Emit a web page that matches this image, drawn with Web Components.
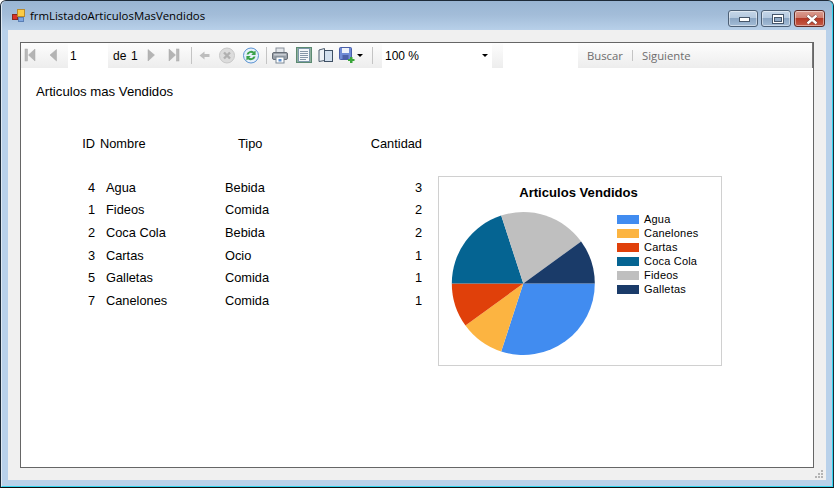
<!DOCTYPE html>
<html>
<head>
<meta charset="utf-8">
<title>frmListadoArticulosMasVendidos</title>
<style>
  html, body { margin: 0; padding: 0; background: #fff; overflow: hidden; }
</style>
</head>
<body>
<win-frame caption="frmListadoArticulosMasVendidos">
  <report-viewer>
    <report-page heading="Articulos mas Vendidos">
      <sales-table></sales-table>
      <pie-chart slot="chart" caption="Articulos Vendidos"></pie-chart>
    </report-page>
  </report-viewer>
</win-frame>

<script>
// Window chrome: title bar, caption buttons and client area
class WinFrame extends HTMLElement {
  constructor() {
    super();
    this.shadow = this.attachShadow({mode: 'open'});
    this.shadow.innerHTML = `<style>
    :host {
      display: block;
      width: 834px;
      height: 488px;
      box-sizing: border-box;
      border: 1px solid #1d2a38;
      border-bottom-color: #0c0c0c;
      border-radius: 6px 6px 0 0;
      background: linear-gradient(#99b5d3 0, #a3bdd9 14px, #b9d1ea 30px);
      font-family: "Liberation Sans", sans-serif;
      position: relative;
    }
    .inner {
      height: 100%;
      box-sizing: border-box;
      display: flex;
      flex-direction: column;
      border-left: 1px solid #dfe9f3;
      border-right: 1px solid #33d4ee;
      border-bottom: 1px solid #33d4ee;
      border-radius: 5px 5px 0 0;
      padding: 0 6px 6px 6px;
    }
    .title {
      flex: 0 0 29px;
      display: flex;
      align-items: center;
      position: relative;
    }
    .title svg { margin: 1px 0 0 4px; }
    .title span {
      margin: 0 0 0 5px;
      font: 11.4px "Open Sans", sans-serif;
      color: #000;
    }
    .buttons {
      margin-left: auto;
      margin-right: 1px;
      display: flex;
      gap: 3px;
      align-self: flex-start;
      margin-top: 9px;
    }
    .btn {
      width: 30px;
      height: 17px;
      box-sizing: border-box;
      border: 1px solid #4c5f75;
      border-radius: 3px;
      box-shadow: inset 0 0 0 1px rgba(255,255,255,.45);
      background: linear-gradient(#c5d6e8 0, #b4c9df 45%, #8ba6c4 50%, #a3bcd6 100%);
      display: flex;
      align-items: center;
      justify-content: center;
    }
    .btn.close {
      background: linear-gradient(#dc9d90 0, #cf7f71 45%, #b53a26 50%, #c55a47 100%);
      border-color: #5f2b26;
      width: 31px;
    }
    .client {
      flex: 1;
      display: flex;
      background: #f0f0f0;
      padding: 12px;
      min-height: 0;
      position: relative;
    }
    .grip { position: absolute; right: 3px; bottom: 2px; }
    </style>
    <div class="inner">
      <div class="title">
        <svg width="13" height="14" viewBox="0 0 13 14">
          <rect x="0.5" y="5.5" width="5" height="5" fill="#d8342a" stroke="#8a2a20"/>
          <rect x="5.5" y="0.5" width="7" height="7" fill="#fbcb45" stroke="#b98a2c"/>
          <rect x="6.5" y="8.5" width="5" height="4" fill="#7ea6e0" stroke="#5a7fb5"/>
        </svg>
        <span></span>
        <div class="buttons">
          <div class="btn">
            <svg width="14" height="7" viewBox="0 0 14 7"><rect x="1.5" y="1.5" width="10" height="4" fill="#fff" stroke="#46566a"/></svg>
          </div>
          <div class="btn">
            <svg width="12" height="10" viewBox="0 0 12 10"><rect x="0.5" y="0.5" width="11" height="9" fill="#fff" stroke="#46566a"/><rect x="2.5" y="3.5" width="7" height="4" fill="#8fa9c6" stroke="#46566a"/></svg>
          </div>
          <div class="btn close">
            <svg width="14" height="11" viewBox="0 0 14 11"><path d="M2.5 1.5 L11.5 9.5 M11.5 1.5 L2.5 9.5" stroke="#5a2a26" stroke-width="3.6"/><path d="M2.5 1.5 L11.5 9.5 M11.5 1.5 L2.5 9.5" stroke="#fff" stroke-width="2.4"/></svg>
          </div>
        </div>
      </div>
      <div class="client">
        <slot></slot>
        <svg class="grip" width="8" height="8" viewBox="0 0 8 8" fill="#b4b4b4">
          <rect x="6" y="0" width="2" height="2"/>
          <rect x="3" y="3" width="2" height="2"/><rect x="6" y="3" width="2" height="2"/>
          <rect x="0" y="6" width="2" height="2"/><rect x="3" y="6" width="2" height="2"/><rect x="6" y="6" width="2" height="2"/>
        </svg>
      </div>
    </div>`;
    this.shadow.querySelector('.title span').textContent = this.getAttribute('caption');
  }
}

// One 18px toolbar icon, picked by name
const TOOL_ICONS = {
  first: `<rect x="4" y="3" width="2.5" height="12" fill="#b9b9b9" stroke="#a8a8a8" stroke-width=".5"/><path d="M14 3 V15 L7.5 9 Z" fill="#b4b4b4" stroke="#a8a8a8" stroke-width=".5"/>`,
  prev: `<path d="M12.5 3.5 V15 L6 9 Z" fill="#b4b4b4" stroke="#a8a8a8" stroke-width=".5"/>`,
  next: `<path d="M6 3.5 V15 L12.5 9 Z" fill="#b4b4b4" stroke="#a8a8a8" stroke-width=".5"/>`,
  last: `<path d="M4 3 V15 L10.5 9 Z" fill="#b4b4b4" stroke="#a8a8a8" stroke-width=".5"/><rect x="11.5" y="3" width="2.5" height="12" fill="#b9b9b9" stroke="#a8a8a8" stroke-width=".5"/>`,
  back: `<path d="M3.5 9.5 L8.5 5.5 V8 H13.5 V11 H8.5 V13.5 Z" fill="#bdbdbd"/>`,
  stop: `<circle cx="9" cy="9.5" r="7.5" fill="#dcdcdc" stroke="#c8c8c8"/><path d="M6 6.5 L12 12.5 M12 6.5 L6 12.5" stroke="#b0b0b0" stroke-width="2.4"/>`,
  refresh: `<circle cx="9" cy="9.5" r="7.5" fill="#e6f1fc" stroke="#5b93d2"/><path d="M4.5 8.5 A4.8 4.8 0 0 1 12 5.8 L13.6 4.5 V9 H9.2 L10.8 7.4 A3 3 0 0 0 6.5 8.5 Z" fill="#3ba24a"/><path d="M13.5 10.5 A4.8 4.8 0 0 1 6 13.2 L4.4 14.5 V10 H8.8 L7.2 11.6 A3 3 0 0 0 11.5 10.5 Z" fill="#3ba24a"/>`,
  print: `<rect x="5" y="2" width="8" height="5" fill="#e4e7eb" stroke="#8a929c"/><rect x="1.5" y="6.5" width="15" height="7" rx="1.5" fill="#9ba1a9" stroke="#666d76"/><rect x="3" y="8" width="12" height="1.5" fill="#c9ced4"/><rect x="5" y="11" width="8" height="6" fill="#fff" stroke="#7a8794"/><rect x="7.5" y="13" width="3" height="2.5" fill="#5b8fd0"/>`,
  layout: `<rect x="1.5" y="1.5" width="15" height="15" fill="#8fb09d" stroke="#5c8a72"/><rect x="3.5" y="2.5" width="11" height="13" fill="#f4f7fa" stroke="#7b98aa"/><path d="M5 5.5 H13 M5 7.5 H13 M5 9.5 H13 M5 11.5 H13 M5 13.5 H11" stroke="#8596a8"/>`,
  setup: `<path d="M2 4 L7.5 2.5 V14.5 L2 15.5 Z" fill="#eef2f6" stroke="#4a5a6c"/><rect x="7.5" y="4.5" width="8" height="11" fill="#d3e0ee" stroke="#3f5064"/>`,
  save: `<rect x="1.5" y="1.5" width="12" height="12" rx="1" fill="#6f8bd6" stroke="#4a5fa8"/><rect x="4" y="2" width="7" height="5" fill="#eef2fa"/><rect x="4.5" y="9" width="6" height="4.5" fill="#4c60a8"/><path d="M12 11 H14.5 V13 H16.5 V15 H14.5 V17 H12 V15 H10 V13 H12 Z" fill="#3aa53a"/>`
};

class ToolIcon extends HTMLElement {
  constructor() {
    super();
    this.shadow = this.attachShadow({mode: 'open'});
    this.shadow.innerHTML = `<style>
    :host { display: block; width: 18px; height: 18px; margin-bottom: 1px; }
    svg { display: block; }
    </style>
    <svg width="18" height="18" viewBox="0 0 18 18">${TOOL_ICONS[this.getAttribute('name')] || ''}</svg>`;
  }
}

// Report viewer: toolbar on top, report in the slot
class ReportViewer extends HTMLElement {
  constructor() {
    super();
    this.shadow = this.attachShadow({mode: 'open'});
    this.shadow.innerHTML = `<style>
    :host {
      display: flex;
      flex-direction: column;
      flex: 1;
      box-sizing: border-box;
      border: 1px solid #666;
      background: #fff;
      min-width: 0;
    }
    .bar {
      flex: 0 0 25px;
      display: flex;
      align-items: center;
      background: linear-gradient(#fdfdfd, #ededed);
      font-size: 12px;
      color: #000;
      border-right: 1px solid #777;
    }
    tool-icon { flex: none; }
    .sep { flex: none; width: 1px; height: 17px; background: #c4c4c4; }
    .input {
      flex: none;
      align-self: stretch;
      background: #fff;
      display: flex;
      align-items: center;
      box-sizing: border-box;
    }
    .drop {
      flex: none;
      width: 8px;
      display: flex;
      justify-content: center;
    }
    .arrow {
      width: 0;
      height: 0;
      border: 3px solid transparent;
      border-top: 3px solid #000;
      border-bottom: 0;
    }
    .link {
      flex: none;
      font: 11.3px "Open Sans", sans-serif;
      color: #6d6d6d;
      margin-bottom: 1px;
    }
    .combo { justify-content: space-between; padding: 0 3px 0 3px; }
    </style>
    <div class="bar">
      <tool-icon name="first"></tool-icon>
      <tool-icon name="prev" style="margin-left:5px"></tool-icon>
      <div class="input" style="margin-left:6px;width:40px;padding-left:2px">1</div>
      <span style="margin-left:5px;width:12px">de</span>
      <span style="margin-left:6px;width:6px">1</span>
      <tool-icon name="next" style="margin-left:5px"></tool-icon>
      <tool-icon name="last" style="margin-left:5px"></tool-icon>
      <div class="sep" style="margin-left:8px"></div>
      <tool-icon name="back" style="margin-left:4px"></tool-icon>
      <tool-icon name="stop" style="margin-left:4px"></tool-icon>
      <tool-icon name="refresh" style="margin-left:6px"></tool-icon>
      <div class="sep" style="margin-left:6px"></div>
      <tool-icon name="print" style="margin-left:4px"></tool-icon>
      <tool-icon name="layout" style="margin-left:6px"></tool-icon>
      <tool-icon name="setup" style="margin-left:4px"></tool-icon>
      <tool-icon name="save" style="margin-left:3px"></tool-icon>
      <div class="drop"><div class="arrow"></div></div>
      <div class="sep" style="margin-left:8px"></div>
      <div class="input combo" style="margin-left:9px;width:110px"><span>100 %</span><span class="drop"><span class="arrow"></span></span></div>
      <div class="input" style="margin-left:11px;width:75px"></div>
      <span class="link" style="margin-left:9px;width:35px">Buscar</span>
      <div class="sep" style="margin-left:10px;height:11px"></div>
      <span class="link" style="margin-left:9px">Siguiente</span>
    </div>
    <slot></slot>`;
  }
}

// Page of the report: heading, then the table with the chart beside it
class ReportPage extends HTMLElement {
  constructor() {
    super();
    this.shadow = this.attachShadow({mode: 'open'});
    this.shadow.innerHTML = `<style>
    :host {
      display: block;
      padding: 17px 0 0 15px;
      font-size: 12.8px;
      line-height: 14px;
      color: #000;
    }
    h1 {
      margin: 0;
      font: 13.2px/14px "Liberation Sans", sans-serif;
    }
    .row { display: flex; margin-top: 34px; }
    .chart { margin: 43px 0 0 16px; }
    </style>
    <h1></h1>
    <div class="row">
      <slot></slot>
      <div class="chart"><slot name="chart"></slot></div>
    </div>`;
    this.shadow.querySelector('h1').textContent = this.getAttribute('heading');
  }
}

const SALES = [
  {id: 4, nombre: 'Agua', tipo: 'Bebida', cantidad: 3},
  {id: 1, nombre: 'Fideos', tipo: 'Comida', cantidad: 2},
  {id: 2, nombre: 'Coca Cola', tipo: 'Bebida', cantidad: 2},
  {id: 3, nombre: 'Cartas', tipo: 'Ocio', cantidad: 1},
  {id: 5, nombre: 'Galletas', tipo: 'Comida', cantidad: 1},
  {id: 7, nombre: 'Canelones', tipo: 'Comida', cantidad: 1}
];

class SalesTable extends HTMLElement {
  constructor() {
    super();
    this.shadow = this.attachShadow({mode: 'open'});
    const rows = SALES.map(r => `
      <div class="num">${r.id}</div>
      <div style="padding-left:11px">${r.nombre}</div>
      <div>${r.tipo}</div>
      <div class="num">${r.cantidad}</div>`).join('');
    this.shadow.innerHTML = `<style>
    :host { display: block; flex: none; }
    .grid {
      display: grid;
      grid-template-columns: 59px 130px 100px 97px;
      grid-template-rows: 22px 21.3px repeat(6, 22.67px);
      align-items: center;
    }
    .num { text-align: right; }
    .gap { grid-column: 1 / -1; }
    </style>
    <div class="grid">
      <div class="num">ID</div>
      <div style="padding-left:5px">Nombre</div>
      <div style="padding-left:13px">Tipo</div>
      <div class="num">Cantidad</div>
      <div class="gap"></div>
      ${rows}
    </div>`;
  }
}

const SLICES = [
  {name: 'Agua', value: 3, color: '#418cf0'},
  {name: 'Canelones', value: 1, color: '#fcb441'},
  {name: 'Cartas', value: 1, color: '#e0400a'},
  {name: 'Coca Cola', value: 2, color: '#056492'},
  {name: 'Fideos', value: 2, color: '#bfbfbf'},
  {name: 'Galletas', value: 1, color: '#1a3b69'}
];

class PieChart extends HTMLElement {
  constructor() {
    super();
    this.shadow = this.attachShadow({mode: 'open'});
    const total = SLICES.reduce((sum, s) => sum + s.value, 0);
    const cx = 72.3, cy = 72.5, r = 71.5;
    let angle = 0;
    // Slices run clockwise from three o'clock
    const paths = SLICES.map(s => {
      const a0 = angle;
      angle += s.value / total * Math.PI * 2;
      const x0 = cx + r * Math.cos(a0), y0 = cy + r * Math.sin(a0);
      const x1 = cx + r * Math.cos(angle), y1 = cy + r * Math.sin(angle);
      const big = angle - a0 > Math.PI ? 1 : 0;
      return `<path d="M${cx} ${cy} L${x0} ${y0} A${r} ${r} 0 ${big} 1 ${x1} ${y1} Z" fill="${s.color}"/>`;
    }).join('');
    const legend = SLICES.map(s => `
      <div class="item"><i style="background:${s.color}"></i><span>${s.name}</span></div>`).join('');
    this.shadow.innerHTML = `<style>
    :host {
      display: block;
      width: 284px;
      height: 190px;
      box-sizing: border-box;
      border: 1px solid #d0d0d0;
      background: #fff;
    }
    .title {
      text-align: center;
      font: bold 13.1px/16px "Liberation Sans", sans-serif;
      padding: 8px 3px 0 0;
    }
    .body { display: flex; margin-top: 10px; padding-left: 12px; }
    svg { display: block; flex: none; }
    .legend { margin: 1px 0 0 21px; }
    .item {
      display: flex;
      align-items: center;
      height: 14px;
      font: 11px/14px "Liberation Sans", sans-serif;
    }
    .item i { width: 22px; height: 9px; margin-right: 5px; }
    .item span { letter-spacing: .2px; }
    </style>
    <div class="title"></div>
    <div class="body">
      <svg width="145" height="145" viewBox="0 0 145 145">${paths}</svg>
      <div class="legend">${legend}</div>
    </div>`;
    this.shadow.querySelector('.title').textContent = this.getAttribute('caption');
  }
}

customElements.define('tool-icon', ToolIcon);
customElements.define('report-viewer', ReportViewer);
customElements.define('report-page', ReportPage);
customElements.define('sales-table', SalesTable);
customElements.define('pie-chart', PieChart);
customElements.define('win-frame', WinFrame);
</script>
</body>
</html>
